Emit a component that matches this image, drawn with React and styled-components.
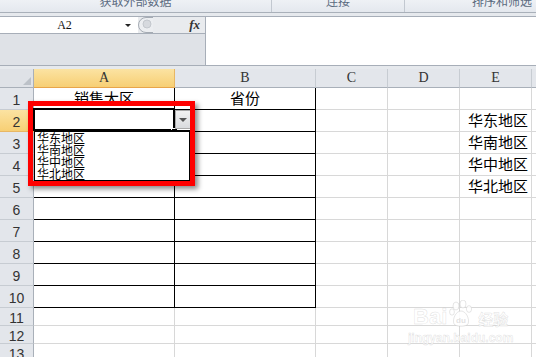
import React from 'react';
import styled, { createGlobalStyle, css } from "styled-components";

const GlobalStyle = createGlobalStyle`
  html, body {
    margin: 0;
    padding: 0;
    background: #fff;
    overflow: hidden;
  }
  body {
    font-family: "Liberation Sans", "Noto Sans CJK SC", sans-serif;
  }
`;

const CJK = `"Noto Sans CJK SC", "Liberation Sans", sans-serif`;

const Page = styled.div`
  position: relative;
  width: 536px;
  height: 357px;
  overflow: hidden;
  display: flex;
  flex-direction: column;
  background: #fff;
`;

// ribbon group labels, cut off at the top of the shot
const Ribbon = styled.div`
  flex: 0 0 12px;
  display: flex;
  overflow: hidden;
  background: linear-gradient(#eef1f5, #e4e8ee);
  border-bottom: 1px solid #a9b0b9;
`;

const Group = styled.div`
  flex: 0 0 ${p => p.$w}px;
  overflow: hidden;
  border-right: 1px solid #c2c8d0;
  text-align: ${p => (p.$left ? 'left' : 'center')};
  padding-left: ${p => p.$pad || 0}px;
  box-sizing: border-box;
`;

const GroupLabel = styled.div`
  margin-top: -5px;
  font: 12px/12px ${CJK};
  color: #5b6b80;
  white-space: nowrap;
`;

const Gap = styled.div`
  flex: 0 0 ${p => p.$h}px;
  background: #e6e9ed;
`;

const FormulaBar = styled.div`
  flex: 0 0 50px;
  box-sizing: border-box;
  display: grid;
  grid-template-columns: 206px 1fr;
  border-top: 1px solid #a7aeb8;
  border-bottom: 1px solid #a7aeb8;
`;

const NameCol = styled.div`
  display: flex;
  flex-direction: column;
  border-right: 1px solid #a7aeb8;
  background: #dfe2e7;
`;

const NameRow = styled.div`
  flex: 0 0 16px;
  display: flex;
  align-items: center;
  border-bottom: 1px solid #a7aeb8;
`;

const NameBox = styled.div`
  flex: 0 0 138px;
  height: 100%;
  background: #fff;
  display: flex;
  align-items: center;
  font: 12px/16px "Liberation Serif", serif;
  color: #111;
`;

const NameText = styled.span`
  flex: 1;
  text-align: center;
  padding-left: 4px;
`;

const NameArrow = styled.span`
  width: 0;
  height: 0;
  margin-right: 7px;
  border-left: 3px solid transparent;
  border-right: 3px solid transparent;
  border-top: 3px solid #222;
`;

const FxArea = styled.div`
  flex: 1;
  height: 100%;
  display: flex;
  align-items: center;
  justify-content: space-between;
  padding-right: 5px;
  background: #e9ebee;
`;

const Fx = styled.span`
  font: italic bold 13px/16px "Liberation Serif", serif;
  color: #333;
`;

const FormulaInput = styled.div`
  background: #fff;
`;

// spreadsheet
const Sheet = styled.div`
  position: relative;
  flex: 1;
  display: grid;
  grid-template-columns: 34px 141px 141px 72px 72px 72px 1fr;
  grid-template-rows: 19px repeat(10, 22px) repeat(3, 18px);
`;

const headBase = css`
  box-sizing: border-box;
  display: flex;
  align-items: center;
  justify-content: center;
  color: #333;
  font: 13px/1 "Liberation Sans", sans-serif;
  border-right: 1px solid #c3c8cf;
  border-bottom: 1px solid #c3c8cf;
`;

const Corner = styled.div`
  ${headBase};
  position: relative;
  background: #dfe2e7;
  border-right-color: #a9b0b9;
  border-bottom-color: #a9b0b9;
`;

const CornerTri = styled.span`
  position: absolute;
  right: 2px;
  bottom: 2px;
  width: 0;
  height: 0;
  border-left: 8px solid transparent;
  border-bottom: 8px solid #bcc1c8;
`;

const ColHead = styled.div`
  ${headBase};
  font-family: "Liberation Serif", serif;
  font-size: 14px;
  background: ${p => (p.$sel ? 'linear-gradient(#fbe3a2, #f7cf74)' : '#e3e6eb')};
  border-bottom-color: ${p => (p.$sel ? '#e8a54a' : '#a9b0b9')};
  border-right-color: ${p => (p.$sel ? '#e8b764' : '#c7ccd2')};
`;

const RowHead = styled.div`
  ${headBase};
  font-size: 14px;
  padding-top: 3px;
  background: ${p => (p.$sel ? 'linear-gradient(#fbe3a2, #f7cf74)' : '#e3e6eb')};
  border-right-color: ${p => (p.$sel ? '#e8a54a' : '#a9b0b9')};
  border-bottom-color: ${p => (p.$sel ? '#e8b764' : '#c7ccd2')};
`;

const Cell = styled.div`
  box-sizing: border-box;
  display: flex;
  align-items: flex-end;
  justify-content: ${p => (p.$center ? 'center' : 'flex-start')};
  padding: 0 0 2px 8px;
  ${p => p.$center && 'padding-left: 0;'}
  font: 15px/18px ${CJK};
  color: #000;
  white-space: nowrap;
  border-right: 1px solid ${p => (p.$line ? '#000' : '#d8d8d8')};
  border-bottom: 1px solid ${p => (p.$line ? '#000' : '#d8d8d8')};
`;

// dropdown list open on A2
const Selection = styled.div`
  position: absolute;
  left: 33px;
  top: 39px;
  width: 142px;
  height: 23px;
  box-sizing: border-box;
  border: 2px solid #000;
  background: #fff;
`;

const FillHandle = styled.div`
  position: absolute;
  left: 171px;
  top: 59px;
  width: 5px;
  height: 5px;
  background: #000;
  border: 1px solid #fff;
`;

const DropButton = styled.div`
  position: absolute;
  left: 175px;
  top: 41px;
  width: 16px;
  height: 19px;
  box-sizing: border-box;
  border: 1px solid #a9a9a9;
  background: linear-gradient(#f2f2f2, #d9dbde);
  display: flex;
  align-items: center;
  justify-content: center;
`;

const DropTri = styled.span`
  width: 0;
  height: 0;
  border-left: 4px solid transparent;
  border-right: 4px solid transparent;
  border-top: 4px solid #555;
`;

const ListBox = styled.div`
  position: absolute;
  left: 34px;
  top: 61px;
  width: 156px;
  height: 51px;
  box-sizing: border-box;
  border: 1px solid #000;
  border-top-width: 2px;
  background: #fff;
  padding: 0 0 0 2px;
`;

const ListItem = styled.div`
  font: 12px/12px ${CJK};
  height: 12px;
  color: #000;
  white-space: nowrap;
`;

const RedFrame = styled.div`
  position: absolute;
  left: 28px;
  top: 32px;
  width: 167px;
  height: 85px;
  box-sizing: border-box;
  border: 5px solid #ff0000;
  box-shadow: 3px 3px 5px rgba(0, 0, 0, 0.45);
`;

// baidu watermark
const Watermark = styled.div`
  position: absolute;
  left: 408px;
  top: 298px;
  display: flex;
  flex-direction: column;
  align-items: center;
  color: rgba(255, 255, 255, 0.85);
  -webkit-text-stroke: 0.5px rgba(185, 185, 185, 0.45);
  pointer-events: none;
`;

const MarkTop = styled.div`
  display: flex;
  align-items: flex-end;
  gap: 1px;
  height: 30px;
`;

const MarkBai = styled.span`
  font: bold 22px/22px "Liberation Sans", sans-serif;
`;

const MarkJy = styled.span`
  font: bold 15px/19px ${CJK};
  margin-left: 3px;
`;

const MarkUrl = styled.span`
  margin-top: 4px;
  font: bold 12px/13px "Liberation Sans", sans-serif;
`;

const cols = ['A', 'B', 'C', 'D', 'E', ''];
const cellText = {
  '1A': '销售大区',
  '1B': '省份',
  '2E': '华东地区',
  '3E': '华南地区',
  '4E': '华中地区',
  '5E': '华北地区',
};
const regions = ['华东地区', '华南地区', '华中地区', '华北地区'];

const RoundButton = () => (
  <svg width="16" height="16" viewBox="0 0 16 16">
    <path d="M15 0.5 H8 A7.5 7.5 0 0 0 8 15.5 H15" fill="#eceef1" stroke="#a5abb3" />
    <circle cx="9" cy="7" r="4" fill="#d6d9de" stroke="#c3c7cd" />
  </svg>
);

const Paw = () => (
  <svg width="26" height="28" viewBox="0 0 26 28">
    <g fill="rgba(255,255,255,0.9)" stroke="rgba(185,185,185,0.45)" strokeWidth="0.8">
      <ellipse cx="8" cy="6" rx="3" ry="4" />
      <ellipse cx="15" cy="4" rx="3" ry="4" />
      <ellipse cx="21" cy="9" rx="2.6" ry="3.4" />
      <ellipse cx="4" cy="12" rx="2.4" ry="3.2" />
      <path d="M13 11 C18 11 22 19 20 24 C18 27 8 27 6 24 C4 19 8 11 13 11 Z" />
    </g>
    <text x="13" y="23" textAnchor="middle" fontSize="8" fontWeight="bold"
      fontFamily="Liberation Sans, sans-serif" fill="rgba(200,200,200,0.55)">du</text>
  </svg>
);

const App = () => {
  return (
    <Page>
      <GlobalStyle />

      <Ribbon>
        <Group $w={272}><GroupLabel>获取外部数据</GroupLabel></Group>
        <Group $w={133}><GroupLabel>连接</GroupLabel></Group>
        <Group $w={200} $left $pad={67}><GroupLabel>排序和筛选</GroupLabel></Group>
      </Ribbon>
      <Gap $h={3} />

      <FormulaBar>
        <NameCol>
          <NameRow>
            <NameBox>
              <NameText>A2</NameText>
              <NameArrow />
            </NameBox>
            <FxArea>
              <RoundButton />
              <Fx>fx</Fx>
            </FxArea>
          </NameRow>
        </NameCol>
        <FormulaInput />
      </FormulaBar>
      <Gap $h={3} />

      <Sheet>
        <Corner><CornerTri /></Corner>
        {cols.map((c, i) => (
          <ColHead key={i} $sel={c === 'A'}>{c}</ColHead>
        ))}

        {Array.from({ length: 13 }, (_, r) => r + 1).map(r => (
          <React.Fragment key={r}>
            <RowHead $sel={r === 2}>{r}</RowHead>
            {cols.map((c, i) => (
              <Cell
                key={i}
                $line={r <= 10 && (c === 'A' || c === 'B')}
                $center={r === 1}
              >
                {cellText[r + c]}
              </Cell>
            ))}
          </React.Fragment>
        ))}

        <Selection />
        <FillHandle />
        <DropButton><DropTri /></DropButton>
        <ListBox>
          {regions.map(t => <ListItem key={t}>{t}</ListItem>)}
        </ListBox>
        <RedFrame />
      </Sheet>

      <Watermark>
        <MarkTop>
          <MarkBai>Bai</MarkBai>
          <Paw />
          <MarkJy>经验</MarkJy>
        </MarkTop>
        <MarkUrl>jingyan.baidu.com</MarkUrl>
      </Watermark>
    </Page>
  );
};

export default App;
